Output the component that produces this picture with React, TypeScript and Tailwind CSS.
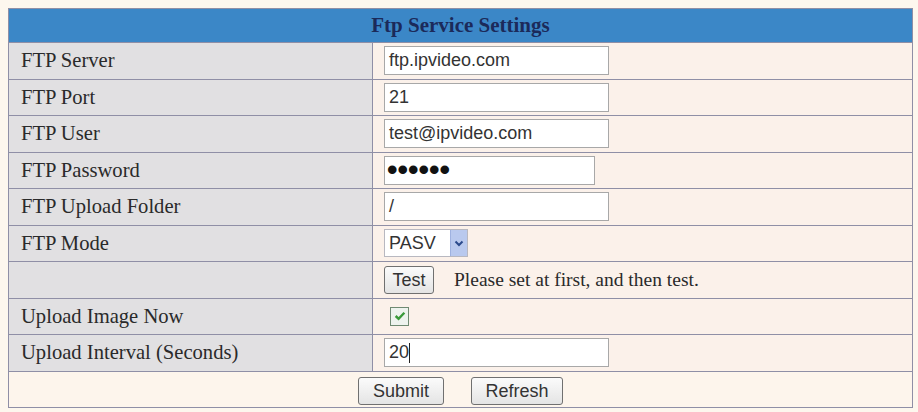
import React from "react"

const serif = "font-['Liberation_Serif','Times_New_Roman',serif]"
const sans = "font-['Liberation_Sans',Arial,sans-serif]"

interface FieldRow {
  label: string
  value: string
  width: string
}

const textRows: FieldRow[] = [
  { label: "FTP Server", value: "ftp.ipvideo.com", width: "w-[225px]" },
  { label: "FTP Port", value: "21", width: "w-[225px]" },
  { label: "FTP User", value: "test@ipvideo.com", width: "w-[225px]" },
]

function Label({ children }: { children?: React.ReactNode }) {
  return (
    <td className={`w-[364px] h-[36.5px] bg-[#e1e0e2] border border-[#8f8fa6] pl-[12px] text-[20.6px] text-[#2a2a2a] ${serif}`}>
      {children}
    </td>
  )
}

function Value({ children }: { children?: React.ReactNode }) {
  return (
    <td className="h-[36.5px] bg-[#fbf1ea] border border-[#8f8fa6] pl-[11px]">
      <div className="flex items-center">{children}</div>
    </td>
  )
}

function TextBox({ value, width, caret }: { value: string; width: string; caret?: boolean }) {
  return (
    <div className={`${width} h-[29px] bg-white border border-[#a8a8a8] px-[4px] flex items-center text-[18px] text-[#333] ${sans}`}>
      {value}
      {caret && <span className="w-px h-[20px] bg-[#222]" />}
    </div>
  )
}

function Btn({ children, className = "" }: { children: React.ReactNode; className?: string }) {
  return (
    <button
      className={`h-[28px] rounded-[3px] border border-[#707070] bg-gradient-to-b from-[#fbfbfb] to-[#e4e4e4] text-[18px] text-[#333] ${sans} ${className}`}
    >
      {children}
    </button>
  )
}

export default function App() {
  return (
    <div className="w-[918px] h-[412px] bg-[#fdf7ee] pt-[8px] pl-[8px] overflow-hidden">
      <table className="w-[905px] border-collapse border border-[#8f8fa6]">
        <tbody>
          <tr>
            <td
              colSpan={2}
              className={`h-[34px] bg-[#3b87c7] border border-[#8f8fa6] text-center font-bold text-[21px] text-[#1b2a5a] ${serif}`}
            >
              Ftp Service Settings
            </td>
          </tr>
          {textRows.map((r) => (
            <tr key={r.label}>
              <Label>{r.label}</Label>
              <Value>
                <TextBox value={r.value} width={r.width} />
              </Value>
            </tr>
          ))}
          <tr>
            <Label>FTP Password</Label>
            <Value>
              <div className={`w-[211px] h-[29px] bg-white border border-[#a8a8a8] pl-[2px] flex items-center text-[30px] leading-none font-bold text-[#111] ${sans}`}>
                ••••••
              </div>
            </Value>
          </tr>
          <tr>
            <Label>FTP Upload Folder</Label>
            <Value>
              <TextBox value="/" width="w-[225px]" />
            </Value>
          </tr>
          <tr>
            <Label>FTP Mode</Label>
            <Value>
              <div className={`w-[84px] h-[28px] bg-white border border-[#b8b8c0] flex items-center ${sans}`}>
                <span className="flex-1 pl-[4px] text-[18px] text-[#333]">PASV</span>
                <span className="w-[17px] h-full bg-[#b9c9ee] border-l border-[#9fb2e0] flex items-center justify-center">
                  <svg width="10" height="7" viewBox="0 0 10 7">
                    <path d="M1.5 1.5 L5 5 L8.5 1.5" fill="none" stroke="#2b4a8c" strokeWidth="2" />
                  </svg>
                </span>
              </div>
            </Value>
          </tr>
          <tr>
            <Label />
            <Value>
              <Btn className="w-[50px]">Test</Btn>
              <span className={`ml-[20px] text-[19.5px] text-[#2a2a2a] ${serif}`}>
                Please set at first, and then test.
              </span>
            </Value>
          </tr>
          <tr>
            <Label>Upload Image Now</Label>
            <Value>
              <div className="ml-[6px] w-[19px] h-[19px] border border-[#6f8a72] bg-[#eef3ee] flex items-center justify-center">
                <svg width="12" height="10" viewBox="0 0 11 9">
                  <path d="M1.5 4.5 L4.2 7 L9.5 1.5" fill="none" stroke="#3a9a3a" strokeWidth="2.2" />
                </svg>
              </div>
            </Value>
          </tr>
          <tr>
            <Label>Upload Interval (Seconds)</Label>
            <Value>
              <TextBox value="20" width="w-[225px]" caret />
            </Value>
          </tr>
          <tr>
            <td colSpan={2} className="h-[36.5px] bg-[#fdf5ec] border border-[#8f8fa6]">
              <div className="flex items-center justify-center gap-[27px] pt-[3px]">
                <Btn className="w-[86px]">Submit</Btn>
                <Btn className="w-[92px]">Refresh</Btn>
              </div>
            </td>
          </tr>
        </tbody>
      </table>
    </div>
  )
}
